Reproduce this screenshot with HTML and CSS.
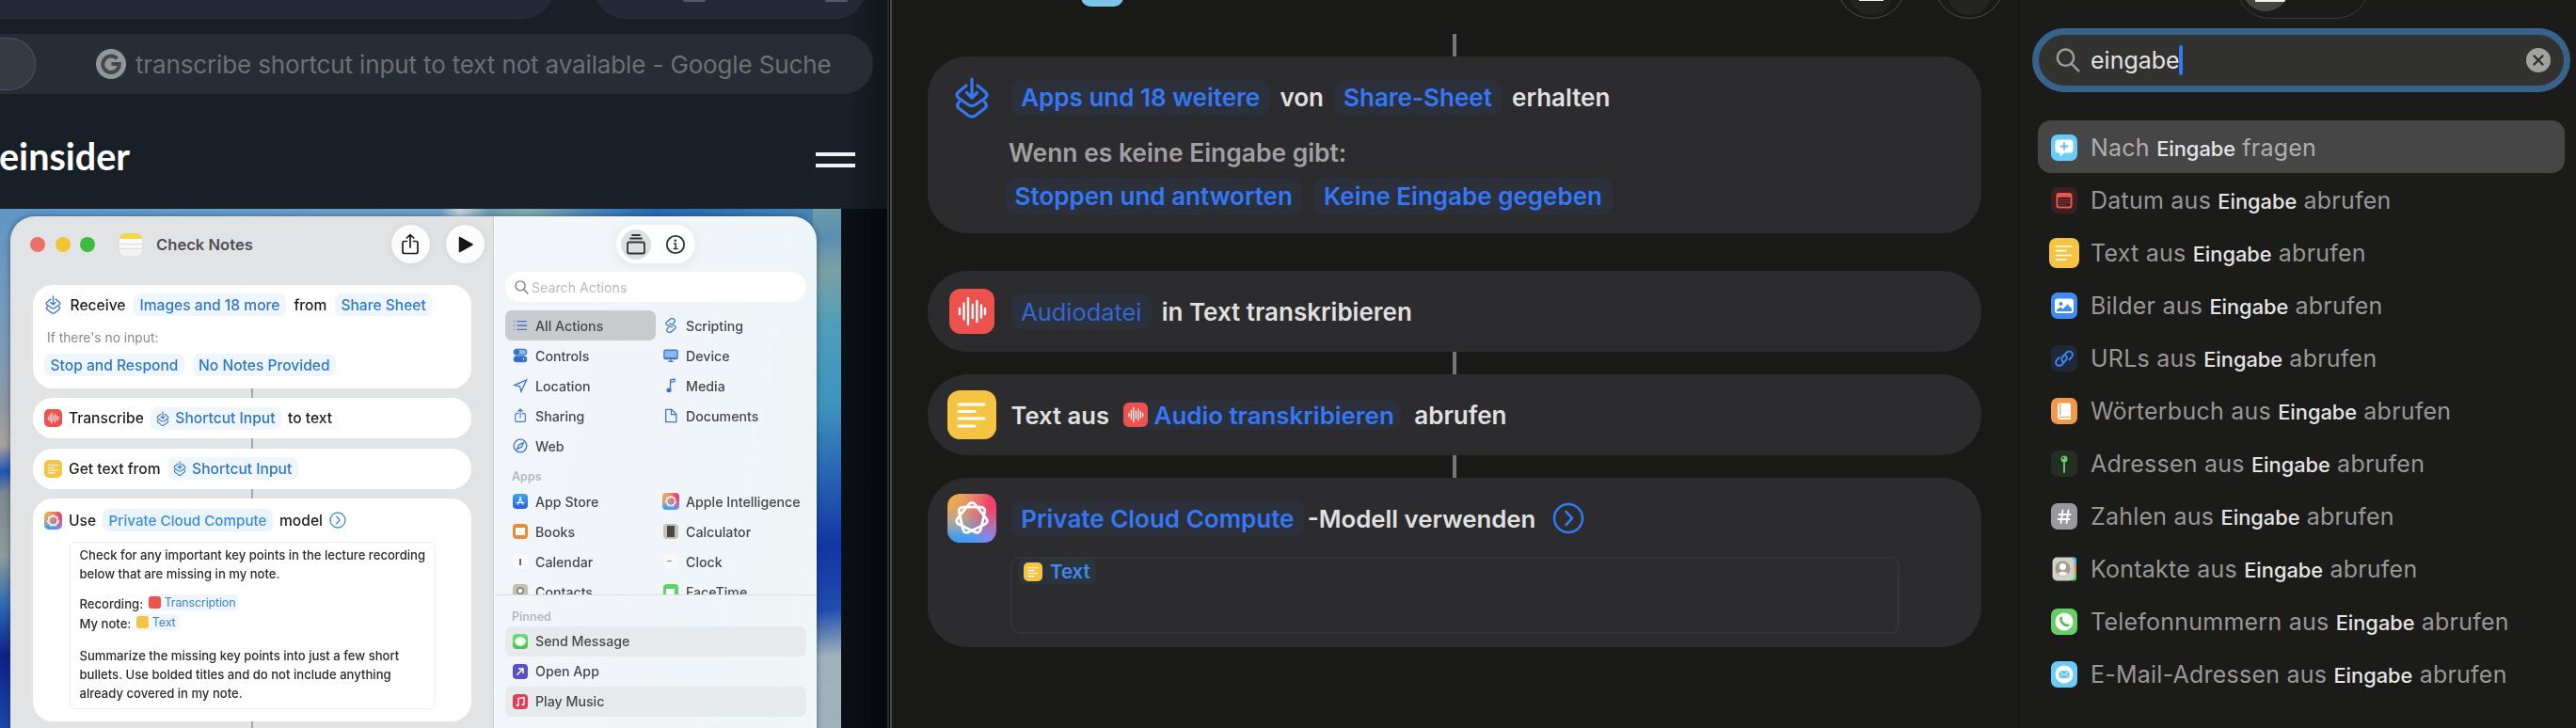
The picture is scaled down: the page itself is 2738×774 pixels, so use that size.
FILE: index.html
```html
<!DOCTYPE html>
<html lang="de">
<head>
    <meta charset="UTF-8"/>
    <meta name="viewport" content="width=device-width, initial-scale=1.0"/>
    <title>Kurzbefehle</title>
    <link rel="stylesheet" href="styles.css">
</head>
<body>
<!--shared icons-->
<svg class="defs" width="0" height="0">
    <symbol id="i-input" viewBox="0 0 36 44">
        <g fill="none" stroke="currentColor" stroke-width="3.2" stroke-linecap="round" stroke-linejoin="round">
            <path d="M12 9L3.6 16q-3 3 0 6L14.5 29.5q3.5 2.2 7 0L32.4 22q3-3 0-6L24 9"/>
            <path d="M4.5 26.5q-3.6 3.6-.5 6.5L14.5 41q3.5 2.2 7 0L32 33q3.1-2.9-.5-6.5"/>
            <path d="M18 2v19M12.5 16.5L18 22l5.5-5.5"/>
        </g>
    </symbol>
    <symbol id="i-wave" viewBox="0 0 48 48">
        <path d="M11 21v6M15.5 15.5v17M20 10v28M24.8 17v14M29.3 13v22M34 17.5v13M38 21v6" fill="none" stroke="#fff" stroke-width="2.4" stroke-linecap="round"/>
    </symbol>
    <symbol id="i-lines" viewBox="0 0 52 52">
        <path d="M12 15h27M12 22.5h17M12 30h27M12 38h17" fill="none" stroke="#fff" stroke-width="3" stroke-linecap="round"/>
    </symbol>
    <symbol id="i-flower" viewBox="0 0 52 52">
        <path d="M29.7 11.6L40.8 25.6Q44.5 30.2 39.2 32.8L23.1 40.5Q17.8 43.1 16.4 37.3L12.5 19.9Q11.2 14.2 17.1 14.2H34.9Q40.9 14.2 39.5 19.9L35.6 37.3Q34.2 43.1 28.9 40.5L12.8 32.8Q7.5 30.2 11.2 25.6L22.3 11.6Q26 7 29.7 11.6Z" fill="none" stroke="#fff" stroke-width="2.8" stroke-linejoin="round"/>
    </symbol>
    <symbol id="i-search" viewBox="0 0 26 26">
        <path d="M10.5 1.5a8.7 8.7 0 1 1 0 17.4a8.7 8.7 0 1 1 0-17.4zM17 17l7.3 7.3" fill="none" stroke="currentColor" stroke-width="2.4" stroke-linecap="round"/>
    </symbol>
    <symbol id="i-next" viewBox="0 0 34 34">
        <path d="M17 2a15 15 0 1 1 0 30a15 15 0 1 1 0-30zM14.5 10l6.5 7l-6.5 7" fill="none" stroke="currentColor" stroke-width="2.6" stroke-linecap="round" stroke-linejoin="round"/>
    </symbol>
    <symbol id="i-share" viewBox="0 0 20 24">
        <path d="M6.5 8.5H4q-2 0-2 2v9q0 2 2 2h12q2 0 2-2v-9q0-2-2-2h-2.5M10 15V1.5M6.3 5L10 1.5L13.7 5" fill="none" stroke="currentColor" stroke-width="1.7" stroke-linecap="round" stroke-linejoin="round"/>
    </symbol>
</svg>

<div class="desktop">
    <!--browser on the left-->
    <section class="browser">
        <div class="toolbar">
            <div class="pill address"></div>
            <div class="pill tools"><i></i><i></i></div>
        </div>
        <div class="tabs">
            <div class="tab current"></div>
            <div class="tab">
                <svg class="favicon" viewBox="0 0 32 32">
                    <circle cx="16" cy="16" r="16" fill="#94979a"/>
                    <path d="M22.5 10.5A8.7 8.7 0 1 0 24.7 16H16.5" fill="none" stroke="#43484d" stroke-width="4"/>
                </svg>
                <span>transcribe shortcut input to text not available - Google Suche</span>
            </div>
        </div>
        <header class="site">
            <span class="brand">einsider</span>
            <div class="burger"><i></i><i></i></div>
        </header>

        <div class="shot">
            <div class="win">
                <div class="flow">
                    <div class="bar">
                        <div class="lights"><i class="red"></i><i class="yellow"></i><i class="green"></i></div>
                        <div class="noteIcon"></div>
                        <b>Check Notes</b>
                        <div class="round"><svg width="20" height="24"><use href="#i-share"/></svg></div>
                        <div class="round"><svg width="16" height="18" viewBox="0 0 16 18"><path d="M1.5 1.5v15L15 9z" fill="#161616" stroke="#161616" stroke-width="1.5" stroke-linejoin="round"/></svg></div>
                    </div>

                    <div class="box first">
                        <div class="line">
                            <span class="slot"><svg class="in" width="17" height="20"><use href="#i-input"/></svg></span>
                            <span>Receive</span>
                            <span class="tag">Images and 18 more</span>
                            <span>from</span>
                            <span class="tag">Share Sheet</span>
                        </div>
                        <p class="cond">If there's no input:</p>
                        <div class="line second">
                            <span class="tag">Stop and Respond</span>
                            <span class="tag">No Notes Provided</span>
                        </div>
                    </div>
                    <div class="link"></div>
                    <div class="box">
                        <div class="line">
                            <span class="slot redIcon"><svg width="19" height="19"><use href="#i-wave"/></svg></span>
                            <span>Transcribe</span>
                            <span class="tag"><svg class="in" width="14" height="16"><use href="#i-input"/></svg>Shortcut Input</span>
                            <span>to text</span>
                        </div>
                    </div>
                    <div class="link"></div>
                    <div class="box">
                        <div class="line">
                            <span class="slot yellowIcon"><svg width="19" height="19"><use href="#i-lines"/></svg></span>
                            <span>Get text from</span>
                            <span class="tag"><svg class="in" width="14" height="16"><use href="#i-input"/></svg>Shortcut Input</span>
                        </div>
                    </div>
                    <div class="link"></div>
                    <div class="box last">
                        <div class="line">
                            <span class="slot aiIcon"><svg width="19" height="19"><use href="#i-flower"/></svg></span>
                            <span>Use</span>
                            <span class="tag sky">Private Cloud Compute</span>
                            <span>model</span>
                            <svg class="go" width="18" height="18"><use href="#i-next"/></svg>
                        </div>
                        <div class="prompt">
                            <p>Check for any important key points in the lecture recording<br>below that are missing in my note.</p>
                            <p class="vars">Recording: <span class="var"><i class="redIcon"></i>Transcription</span><br>My note: <span class="var"><i class="yellowIcon"></i>Text</span></p>
                            <p>Summarize the missing key points into just a few short<br>bullets. Use bolded titles and do not include anything<br>already covered in my note.</p>
                        </div>
                    </div>
                    <div class="link"></div>
                </div>

                <div class="library">
                    <div class="switch">
                        <span class="on"><svg width="22" height="24" viewBox="0 0 22 24"><path d="M7 2h8M5 5.5h12M4 9.5h14q2 0 2 2v8q0 2-2 2H4q-2 0-2-2v-8q0-2 2-2z" fill="none" stroke="#333" stroke-width="1.8" stroke-linecap="round"/></svg></span>
                        <span><svg width="22" height="22" viewBox="0 0 22 22"><circle cx="11" cy="11" r="9.2" fill="none" stroke="#333" stroke-width="1.8"/><circle cx="10.8" cy="6.7" r="1.3" fill="#333"/><path d="M9 10h2.2v5.5M8.6 15.5h5" fill="none" stroke="#333" stroke-width="1.5"/></svg></span>
                    </div>
                    <div class="find"><svg width="15" height="15"><use href="#i-search"/></svg>Search Actions</div>
                    <div class="scroll">
                        <ul class="grid">
                            <li class="cur"><svg viewBox="0 0 18 18"><path d="M5 4h12M5 9h12M5 14h12M1 4h1M1 9h1M1 14h1"/></svg>All Actions</li>
                            <li><svg viewBox="0 0 18 18"><path d="M9 1L4 5q-2 2.5 1 4l6 2M9 17l5-4q2-2.5-1-4L7 6.5M9 1q4-1 5 2q0 2-3 4M9 17q-4 1-5-2q0-2 3-4"/></svg>Scripting</li>
                            <li><svg viewBox="0 0 18 18"><rect x="1.5" y="1.5" width="15" height="6.5" rx="3.2" fill="#8fb4e6"/><circle cx="5" cy="4.8" r="2.3" fill="#2d69c9"/><rect x="1.5" y="10" width="15" height="6.5" rx="3.2" fill="#2d69c9"/><circle cx="13" cy="13.2" r="1.5" fill="#fff"/></svg>Controls</li>
                            <li><svg viewBox="0 0 18 18"><rect x="1" y="2.5" width="16" height="10.5" rx="1.5" fill="#8fb4f0"/><path d="M1 12h16M6 16h6M9 13v3"/></svg>Device</li>
                            <li><svg viewBox="0 0 18 18"><path d="M16.5 2L2 8.5l6.5 1.5L10 16z"/></svg>Location</li>
                            <li><svg viewBox="0 0 18 18"><path d="M8.5 14V2l5-.8v3l-5 .8"/><ellipse cx="6.8" cy="14.5" rx="2.2" ry="1.8" fill="#2d69c9"/></svg>Media</li>
                            <li><svg viewBox="0 0 20 24"><use href="#i-share"/></svg>Sharing</li>
                            <li><svg viewBox="0 0 18 18"><path d="M3 1.5h7L15.5 7v9.5H3zM9.5 1.5V7.5h6"/></svg>Documents</li>
                            <li><svg viewBox="0 0 18 18"><circle cx="9" cy="9" r="7.7"/><path d="M12.8 5.2L10.5 10.5L5.2 12.8L7.5 7.5z"/></svg>Web</li>
                        </ul>
                        <h4 class="label">Apps</h4>
                        <ul class="grid">
                            <li><i class="app store"><svg width="14" height="14" viewBox="0 0 14 14"><path d="M7.8 2.5L4 10.5M6.2 2.5L10 10.5M2.5 8.5h9" fill="none" stroke="#fff" stroke-width="1.2"/></svg></i>App Store</li>
                            <li><i class="app aiIcon big"><svg width="18" height="18"><use href="#i-flower"/></svg></i>Apple Intelligence</li>
                            <li><i class="app books"></i>Books</li>
                            <li><i class="app calc"></i>Calculator</li>
                            <li><i class="app cal"></i>Calendar</li>
                            <li><i class="app clock"></i>Clock</li>
                            <li><i class="app contacts"></i>Contacts</li>
                            <li><i class="app facetime"></i>FaceTime</li>
                        </ul>
                    </div>
                    <div class="pinned">
                        <h4 class="label">Pinned</h4>
                        <ul>
                            <li class="shade"><i class="app message"></i>Send Message</li>
                            <li><i class="app open"><svg width="14" height="14" viewBox="0 0 14 14"><path d="M3.5 10.5l6-6M5 4h5v5" fill="none" stroke="#fff" stroke-width="1.5"/></svg></i>Open App</li>
                            <li class="shade"><i class="app music"><svg width="14" height="14" viewBox="0 0 14 14"><path d="M5 11V3.5l6-1V10" fill="none" stroke="#fff" stroke-width="1.3"/><circle cx="4" cy="11" r="1.3" fill="#fff"/><circle cx="10" cy="10" r="1.3" fill="#fff"/></svg></i>Play Music</li>
                        </ul>
                    </div>
                </div>
            </div>
        </div>
    </section>

    <!--editor-->
    <main class="editor">
        <div class="head">
            <div class="appicon"></div>
            <div class="knob"><i></i></div>
            <div class="knob off"><i></i></div>
        </div>
        <div class="wire"></div>
        <div class="card">
            <div class="row">
                <span class="ico"><svg class="blue" width="36" height="44"><use href="#i-input"/></svg></span>
                <span class="chip">Apps und 18 weitere</span>
                <span>von</span>
                <span class="chip">Share-Sheet</span>
                <span>erhalten</span>
            </div>
            <p class="hint">Wenn es keine Eingabe gibt:</p>
            <div class="row sub">
                <span class="chip">Stoppen und antworten</span>
                <span class="chip">Keine Eingabe gegeben</span>
            </div>
        </div>
        <div class="wire none"></div>
        <div class="card single">
            <div class="row">
                <span class="ico"><i class="tile redIcon"><svg width="48" height="48"><use href="#i-wave"/></svg></i></span>
                <span class="chip empty">Audiodatei</span>
                <span>in Text transkribieren</span>
            </div>
        </div>
        <div class="wire"></div>
        <div class="card single">
            <div class="row">
                <span class="ico"><i class="tile large yellowIcon"><svg width="52" height="52"><use href="#i-lines"/></svg></i></span>
                <span class="lead">Text aus</span>
                <span class="chip slim"><i class="mini redIcon"><svg width="26" height="26"><use href="#i-wave"/></svg></i>Audio transkribieren</span>
                <span class="tail">abrufen</span>
            </div>
        </div>
        <div class="wire"></div>
        <div class="card model">
            <div class="row">
                <span class="ico"><i class="tile large aiIcon"><svg width="52" height="52"><use href="#i-flower"/></svg></i></span>
                <span class="chip">Private Cloud Compute</span>
                <span class="glue">-Modell verwenden</span>
                <svg class="blue more" width="34" height="34"><use href="#i-next"/></svg>
            </div>
            <div class="field">
                <span class="token"><i class="yellowIcon"><svg width="20" height="20"><use href="#i-lines"/></svg></i>Text</span>
            </div>
        </div>
    </main>

    <!--action search-->
    <aside class="sidebar">
        <div class="head">
            <div class="modes"><i class="on"></i><i></i></div>
        </div>
        <div class="search">
            <svg class="glass" width="26" height="26"><use href="#i-search"/></svg>
            <span>eingabe</span><i class="caret"></i>
            <svg class="clear" width="26" height="26" viewBox="0 0 26 26"><circle cx="13" cy="13" r="13" fill="#a2a2a1"/><path d="M8.5 8.5l9 9M17.5 8.5l-9 9" stroke="#30302f" stroke-width="2.4" stroke-linecap="round"/></svg>
        </div>
        <ul class="results">
            <li class="cur">
                <svg viewBox="0 0 28 28"><rect width="28" height="28" rx="7" fill="#68cdf8"/><path d="M8 5.5h12q3.5 0 3.5 3v7.5q0 3.5-3.5 3.5h-6l-4.5 4v-4H8q-3.5 0-3.5-3.5V8.5q0-3 3.5-3z" fill="#fff"/><path d="M14 8.5v8M10 12.5h8" stroke="#54c4f5" stroke-width="1.8"/></svg>
                <span>Nach <b>Eingabe</b> fragen</span>
            </li>
            <li>
                <svg viewBox="0 0 28 28"><rect width="28" height="28" rx="7" fill="#382120"/><rect x="6.5" y="7" width="15" height="14.5" rx="2" fill="none" stroke="#f0544f" stroke-width="2"/><path d="M6 9h16" stroke="#f0544f" stroke-width="3.5"/><path d="M9.5 13.5h9.5M9.5 16h9.5M9.5 18.5h6" stroke="#d84b47" stroke-width="1.2" stroke-dasharray="1.3 1.3"/></svg>
                <span>Datum aus <b>Eingabe</b> abrufen</span>
            </li>
            <li>
                <svg class="wide" viewBox="0 0 32 32"><rect width="32" height="32" rx="8" fill="#f5c443"/><path d="M7.5 9h16M7.5 13.7h10.5M7.5 18.5h16M7.5 23.2h10.5" stroke="#fff" stroke-width="1.7" stroke-linecap="round"/></svg>
                <span>Text aus <b>Eingabe</b> abrufen</span>
            </li>
            <li>
                <svg viewBox="0 0 28 28"><rect width="28" height="28" rx="7" fill="#3d8bf7"/><rect x="4" y="6.5" width="20" height="15.5" rx="3" fill="#fff"/><circle cx="10.5" cy="12" r="2" fill="#3d8bf7"/><path d="M6 20v-1.5l4-3l2.5 2l5-5l4.5 4.5V20z" fill="#3d8bf7"/></svg>
                <span>Bilder aus <b>Eingabe</b> abrufen</span>
            </li>
            <li>
                <svg viewBox="0 0 28 28"><rect width="28" height="28" rx="7" fill="#1f2836"/><g fill="none" stroke="#3d8bf7" stroke-width="1.9" stroke-linecap="round"><path d="M13 18a3.6 3.6 0 0 1-.8-5.5l4.5-4.8a3.6 3.6 0 0 1 5.2 5l-2.5 2.8"/><path d="M15 10.5a3.6 3.6 0 0 1 .8 5.5l-4.5 4.8a3.6 3.6 0 0 1-5.2-5l2.5-2.8"/></g></svg>
                <span>URLs aus <b>Eingabe</b> abrufen</span>
            </li>
            <li>
                <svg viewBox="0 0 28 28"><rect width="28" height="28" rx="7" fill="#f2984a"/><path d="M9.5 5.5h9.5q2 0 2 2V23H9.5q-2.5 0-2.5-2.5V8q0-2.5 2.5-2.5z" fill="#fff"/><path d="M9.8 6v12.5M8.5 20.5h12" stroke="#f2984a" stroke-width="1.2"/></svg>
                <span>Wörterbuch aus <b>Eingabe</b> abrufen</span>
            </li>
            <li>
                <svg viewBox="0 0 28 28"><rect width="28" height="28" rx="7" fill="#232e24"/><circle cx="14" cy="9" r="3.5" fill="#66cf66"/><path d="M14 11v12" stroke="#66cf66" stroke-width="1.9" stroke-linecap="round"/><circle cx="13" cy="8" r="1" fill="#232e24"/></svg>
                <span>Adressen aus <b>Eingabe</b> abrufen</span>
            </li>
            <li>
                <svg viewBox="0 0 28 28"><rect width="28" height="28" rx="7" fill="#98989e"/><path d="M12.5 7.5L10.5 21M18.5 7.5L16.5 21M8.5 12h12M7.5 17h12" stroke="#fff" stroke-width="1.9" stroke-linecap="round"/></svg>
                <span>Zahlen aus <b>Eingabe</b> abrufen</span>
            </li>
            <li>
                <svg viewBox="0 0 28 28"><rect x="20" y="1.5" width="7" height="25" rx="3" fill="#63cf6f"/><path d="M20 1.5h3q4 0 4 4V10h-7z" fill="#55b8f3"/><path d="M22 10h5v8h-5z" fill="#f2903c"/><rect x="1.5" y="1.5" width="23" height="25" rx="5" fill="#d0d2c3"/><circle cx="12.5" cy="13.5" r="8" fill="#a29c8f"/><circle cx="12.5" cy="11.5" r="3.5" fill="#fff"/><path d="M7 19q5.5-5 11 0q-5.5 4.5-11 0z" fill="#f2f2ee"/></svg>
                <span>Kontakte aus <b>Eingabe</b> abrufen</span>
            </li>
            <li>
                <svg viewBox="0 0 28 28"><rect width="28" height="28" rx="7" fill="#67cf67"/><circle cx="14" cy="14" r="9.5" fill="#fff"/><path d="M10.8 9.8q-1.3 3 2 6.2q3 2.8 5.4 1.6" fill="none" stroke="#4dbb50" stroke-width="2.6" stroke-linecap="round"/></svg>
                <span>Telefonnummern aus <b>Eingabe</b> abrufen</span>
            </li>
            <li>
                <svg viewBox="0 0 28 28"><rect width="28" height="28" rx="7" fill="#6acdf8"/><circle cx="14" cy="14" r="9.5" fill="#fff"/><rect x="8.5" y="10.3" width="11" height="7.6" rx="1.5" fill="#5cc5f4"/><path d="M9 10.8l5 4l5-4M9 17.5l3.5-3.5M19 17.5L15.5 14" fill="none" stroke="#fff" stroke-width=".9"/></svg>
                <span>E-Mail-Adressen aus <b>Eingabe</b> abrufen</span>
            </li>
        </ul>
    </aside>
</div>
</body>
</html>
```
FILE: styles.css
```css
* {
    margin: 0;
    padding: 0;
    box-sizing: border-box;
}

body {
    background: #191917;
    font-family: Inter, "Liberation Sans", sans-serif;
    overflow: hidden;
}

ul {
    list-style: none;
}

svg {
    display: block;
    flex: none;
}

.defs {
    position: absolute;
}

.desktop {
    display: grid;
    grid-template-columns: 948px 1198px 592px;
    height: 774px;
    overflow: hidden;
}

/* icon tiles */
.redIcon {
    background: #ec524e;
}

.yellowIcon {
    background: #f5c443;
}

.aiIcon {
    background: radial-gradient(circle at 8% 8%, #f2ac48 0, rgba(242, 172, 72, 0) 60%),
        radial-gradient(circle at 92% 18%, #f0436c 10%, rgba(240, 67, 108, 0) 62%),
        radial-gradient(circle at 100% 88%, #8d86f2 0, rgba(141, 134, 242, 0) 45%),
        linear-gradient(#c98f94, #8aa5c4 55%, #3d9bf3 95%);
}

/* browser */
.browser {
    background: linear-gradient(90deg, #181f26 0, #181f26 900px, #12161d 943px);
    border-right: 2px solid #4b4b48;
    box-shadow: inset -1px 0 #050607, inset -3px 0 #2a2e32;
    overflow: hidden;
}

.toolbar {
    display: flex;
    gap: 44px;
    height: 36px;
}

.pill {
    height: 66px;
    margin-top: -46px;
    background: #232935;
    border-bottom: 1px solid #2d2f31;
}

.address {
    width: 588px;
    border-radius: 0 32px 32px 0;
}

.tools {
    display: flex;
    justify-content: space-between;
    width: 288px;
    padding: 44px 19px 0 94px;
    border-radius: 32px;
}

.tools i {
    width: 24px;
    height: 4px;
    border-radius: 2px;
    background: #565b63;
}

.tabs {
    display: flex;
    width: 928px;
    height: 64px;
    padding: 4px 0;
    background: #272d34;
    border-radius: 0 32px 32px 0;
}

.tab {
    display: flex;
    align-items: center;
    gap: 10px;
    padding-left: 64px;
    color: #6c7176;
    font-size: 26px;
    letter-spacing: -.14px;
    white-space: nowrap;
}

.tab.current {
    width: 38px;
    background: #343b43;
    border: 1px solid #43566c;
    border-left: 0;
    border-radius: 0 28px 28px 0;
    padding: 0;
}

.favicon {
    width: 32px;
    height: 32px;
}

.site {
    display: flex;
    align-items: center;
    justify-content: space-between;
    height: 122px;
    padding: 0 37px 18px 0;
}

.brand {
    margin-left: -1px;
    color: #fff;
    font: 700 39.5px/50px Lato, sans-serif;
    padding-top: 27px;
}

.burger {
    display: grid;
    gap: 8px;
    padding-top: 36px;
}

.burger i {
    width: 42px;
    height: 4px;
    background: #f0f1f2;
}

/* article image with the light window */
.shot {
    width: 943px;
    height: 552px;
    padding: 8px 75px 0 11px;
    background: linear-gradient(90deg, #0b1018, #06090e) 894px 0 / 49px 552px no-repeat,
        linear-gradient(172deg, #6f9da9 0, #5a8fb0 6%, #7ba0a4 12%, #4c9dbb 24%, #3f93bd 38%, #2a69b5 50%, #1335a5 65%, #1f4dad 77%, #9fb2bb 86%, #a0b1b8 100%) 864px 0 / 30px 552px no-repeat,
        linear-gradient(168deg, #6097c6 0, #7f9ab5 28%, #9298a3 38%, #a9a29e 45%, #1d55b8 50%, #7a8a90 54%, #8e9c9a 66%, #2a66b0 76%, #0d2088 85%, #1c4cac 100%) 0 0 / 40px 552px no-repeat,
        linear-gradient(100deg, #5c99cd 0, #6fa2c9 45%, #c3d3df 47%, #6ba0b5 50%, #86aeb3 54%, #4f87b7 60%, #256ab7 67%, #3f80b4 80%, #7aa0a7 100%);
}

.win {
    display: grid;
    grid-template-columns: 514px 343px;
    height: 600px;
    border-radius: 26px;
    overflow: hidden;
    filter: blur(.4px);
    box-shadow: 0 0 6px rgba(20, 30, 50, .5);
}

.flow {
    padding: 0 23px 0 23.5px;
    background: #e1e3e5;
    border-right: 1px solid #c9ccd0;
    font-size: 15.6px;
    font-weight: 500;
    color: #1d1d1f;
}

.bar {
    display: flex;
    align-items: center;
    height: 59px;
    margin: 0 -14px 13.7px -2.5px;
}

.bar b {
    margin-left: 15px;
    margin-right: auto;
    font-size: 16.6px;
    font-weight: 600;
    color: #4e5053;
}

.lights {
    display: flex;
    gap: 10.5px;
}

.lights i {
    width: 16px;
    height: 16px;
    border-radius: 50%;
}

.lights .red {
    background: #ed6f69;
}

.lights .yellow {
    background: #f3c536;
}

.lights .green {
    background: #3dbb3e;
}

.noteIcon {
    width: 24px;
    height: 24px;
    margin-left: 26px;
    border-radius: 6px;
    background: linear-gradient(#f2d54f 6px, #fafafa 6px, #fafafa 11px, #d8d8d8 11px, #d8d8d8 12px, #f7f7f7 12px, #f7f7f7 16px, #dcdcdc 16px, #dcdcdc 17px, #f3f3f3 17px);
}

.round {
    display: flex;
    align-items: center;
    justify-content: center;
    width: 41px;
    height: 41px;
    margin-left: 17.5px;
    border-radius: 50%;
    background: #fcfcfd;
    box-shadow: 0 0 8px rgba(0, 0, 0, .08);
}

.box {
    height: 43.3px;
    padding: 9.7px 12.5px;
    border-radius: 21px;
    background: #fff;
}

.box.first {
    height: 110px;
}

.box.last {
    height: 236.5px;
    padding-top: 11px;
}

.link {
    width: 2px;
    height: 10.3px;
    margin: 0 auto;
    background: #a4a6a9;
}

.line {
    display: flex;
    align-items: center;
    gap: 7px;
    height: 24px;
    white-space: nowrap;
}

.first .line {
    gap: 8.5px;
}

.slot {
    display: flex;
    justify-content: center;
    align-items: center;
    width: 19px;
    height: 19px;
    border-radius: 5px;
}

.in {
    color: #3f7fcb;
}

.tag {
    display: flex;
    align-items: center;
    gap: 6px;
    height: 24px;
    padding: 0 6.5px;
    border-radius: 7px;
    background: #eff6fd;
    color: #2f77cf;
}

.tag.sky {
    color: #3d8bdc;
    background: #eaf4fd;
    font-size: 15.2px;
}

.cond {
    padding: 13px 0 7px 3px;
    font-size: 13.8px;
    font-weight: 400;
    line-height: 20px;
    color: #88898b;
}

.go {
    color: #3d8bdc;
}

.prompt {
    width: 389px;
    height: 178px;
    margin: 11px 0 0 26.5px;
    padding: 4px 10px;
    border: 1px solid #efefef;
    border-radius: 6px;
    font-size: 13.1px;
    line-height: 19.7px;
    color: #2b2b2c;
    white-space: nowrap;
}

.prompt .vars {
    margin: 11px 0 13.5px;
    line-height: 21.7px;
}

.var {
    display: inline-flex;
    align-items: center;
    gap: 4px;
    height: 17px;
    margin-left: 2px;
    padding-right: 3px;
    border-radius: 4px;
    background: #eff6fd;
    color: #3d83cf;
    font-weight: 400;
    font-size: 12.6px;
    letter-spacing: -.2px;
    line-height: 17px;
}

.var i {
    width: 13px;
    height: 13px;
    border-radius: 3px;
}

.library {
    padding: 9px 11px 0;
    background: linear-gradient(100deg, #f2f5f9 0, #f1f5f9 50%, #edf5f7 85%, #f3f8f9 100%);
    border-left: 1px solid #fff;
    font-size: 14.2px;
    font-weight: 500;
    color: #46484b;
}

.switch {
    display: flex;
    align-items: center;
    justify-content: space-between;
    width: 84px;
    height: 41px;
    margin: 0 auto;
    padding: 0 10px 0 5px;
    border-radius: 21px;
    background: #fdfefe;
    box-shadow: 0 2px 14px rgba(0, 0, 0, .07);
}

.switch span {
    display: flex;
    align-items: center;
    justify-content: center;
}

.switch .on {
    width: 32px;
    height: 32px;
    border-radius: 50%;
    background: #dcdfe1;
}

.find {
    display: flex;
    align-items: center;
    gap: 3px;
    height: 32px;
    margin: 9px 0;
    padding-left: 10px;
    border-radius: 16px;
    background: #fff;
    color: #b9babc;
    font-weight: 400;
}

.find svg {
    color: #7c7e80;
}

.scroll {
    height: 302px;
    overflow: hidden;
}

.grid {
    display: grid;
    grid-template-columns: 160px 160px;
}

.library li {
    display: grid;
    grid-template-columns: 31px 1fr;
    gap: 1px;
    align-items: center;
    height: 32px;
    border-radius: 7px;
    white-space: nowrap;
}

.library li > svg,
.app {
    justify-self: center;
    width: 16px;
    height: 16px;
}

.library li > svg {
    fill: none;
    stroke: #3d78d0;
    stroke-width: 1.5;
    color: #3d78d0;
}

.library li.cur {
    background: #c8cacd;
}

.app {
    display: flex;
    align-items: center;
    justify-content: center;
    border-radius: 4px;
}

.app.big {
    width: 18px;
    height: 18px;
}

.store {
    background: linear-gradient(#3fa4f5, #2464dc);
}

.books {
    background: linear-gradient(#fff, #fff) 3px 4px / 10px 8px no-repeat, #ea8c34;
}

.calc {
    background: linear-gradient(#4a4640, #4a4640) 4px 2px / 8px 12px no-repeat, #c4c1ba;
}

.cal {
    background: linear-gradient(#6d6665, #6d6665) 7px 5px / 2px 7px no-repeat, #fbfafa;
}

.clock {
    background: linear-gradient(#888, #888) 4px 7px / 5px 1px no-repeat, #f8f8f8;
}

.contacts {
    background: radial-gradient(circle at 50% 45%, #fff 2px, #8e8a80 2.5px, #8e8a80 4px, transparent 4.5px), #c5bfae;
}

.facetime {
    background: linear-gradient(#fff, #fff) 3px 5px / 9px 6px no-repeat, #5fd36a;
}

.message {
    background: radial-gradient(ellipse 6px 5px at center, #f2fff2 90%, transparent), linear-gradient(#6fe077, #45c350);
}

.open {
    background: #5a50c8;
}

.music {
    background: #e23d5c;
}

.label {
    height: 27.4px;
    padding: 5px 0 0 7px;
    font-size: 12.5px;
    line-height: 24px;
    font-weight: 600;
    color: #b3b6b9;
}

.pinned {
    margin: 0 -11px;
    padding: 0 11px;
    border-top: 1px solid #dadde0;
}

.pinned .label {
    height: 32.5px;
    padding-top: 11px;
}

.shade {
    background: #e7eaec;
}

/* editor */
.editor {
    padding: 0 40px 0 38px;
    background: #191917;
    color: #e0e0e0;
    font-size: 26px;
    font-weight: 600;
}

.head {
    display: flex;
    height: 36px;
}

.appicon {
    width: 45px;
    height: 45px;
    margin: -38px auto 0 163px;
    border-radius: 10px;
    background: #7cc3ea;
}

.knob {
    width: 74px;
    height: 74px;
    margin: -54px 0 0 30px;
    padding: 6px 13px;
    border: 1px solid #4a4a49;
    border-radius: 50%;
}

.knob:last-child {
    margin-right: -24px;
}

.knob i {
    display: block;
    width: 46px;
    height: 63px;
    border-radius: 23px;
    background: linear-gradient(#f2f2f2, #f2f2f2) 10px 38px / 26px 10px no-repeat, #222221;
}

.knob.off i {
    background: #242423;
}

.wire {
    width: 4px;
    height: 24px;
    margin: 0 auto;
    background: #77777b;
}

.wire.none {
    height: 40px;
    background: none;
}

.card {
    width: 1120px;
    height: 188px;
    padding: 24.5px 21px 0;
    border-radius: 42px;
    background: #2c2c2e;
}

.card.single {
    height: 86px;
    padding-top: 24px;
}

.card.model {
    height: 180px;
    padding-top: 24px;
}

.row {
    display: flex;
    align-items: center;
    gap: 10.6px;
    height: 38px;
    white-space: nowrap;
}

.ico {
    display: flex;
    justify-content: center;
    width: 52px;
    margin-right: 5px;
}

.blue {
    color: #3478f6;
}

.tile {
    width: 48px;
    height: 48px;
    border-radius: 12px;
}

.tile.large {
    width: 52px;
    height: 52px;
    border-radius: 13px;
}

.chip {
    display: flex;
    align-items: center;
    height: 38px;
    padding: 0 10.6px;
    border-radius: 10px;
    background: #2c303b;
    color: #3478f6;
}

.chip.empty {
    color: #3269d0;
    font-size: 25.4px;
    font-weight: 400;
}

.chip.slim {
    gap: 7px;
    height: 32px;
    margin-left: 2px;
    padding: 0 7px 0 2px;
    font-size: 25.9px;
}

.mini {
    width: 26px;
    height: 26px;
    border-radius: 6px;
}

.lead {
    font-size: 25.6px;
}

.tail {
    margin-left: 4px;
}

.glue {
    margin-left: -7px;
    font-size: 25.8px;
}

.more {
    margin-left: 7px;
}

.hint {
    padding: 20px 0 9px 65px;
    font-size: 26.4px;
    line-height: 38px;
    color: #a0a0a0;
}

.sub {
    gap: 12px;
    padding-left: 61px;
}

.field {
    width: 945px;
    height: 82px;
    margin: 22px 0 0 67px;
    border: 2px solid #353538;
    border-radius: 10px;
}

.token {
    display: flex;
    align-items: center;
    gap: 8px;
    width: 82px;
    height: 27px;
    margin-left: 7px;
    padding-left: 5px;
    border-radius: 6px;
    background: #2b333d;
    color: #3f8cf0;
    font-size: 20.5px;
}

.token i {
    width: 20px;
    height: 20px;
    border-radius: 5px;
}

/* sidebar */
.sidebar {
    padding: 0 6px 0 13px;
    background: #1b1b1a;
    border-left: 1px solid #131312;
    overflow: hidden;
}

.sidebar .head {
    height: 30px;
    padding-left: 216px;
}

.modes {
    display: flex;
    gap: 30px;
    width: 143px;
    height: 74px;
    margin-top: -54px;
    padding: 6px;
    border: 1px solid #3a3a39;
    border-radius: 37px;
}

.modes i {
    width: 60px;
    height: 59px;
    border-radius: 29px;
    background: linear-gradient(#eee, #eee) 8px 38px / 13px 9px no-repeat;
}

.modes .on {
    background: linear-gradient(#f4f4f4, #f4f4f4) 14px 40px / 33px 9px no-repeat, #444443;
}

.search {
    display: flex;
    align-items: center;
    height: 68px;
    padding: 0 14px 0 18px;
    border: 7px solid #36628c;
    border-radius: 34px;
    background: #323231;
    color: #e2e2e2;
    font-size: 25px;
}

.glass {
    margin-right: 11px;
    color: #a0a09f;
}

.caret {
    width: 4px;
    height: 32px;
    margin-left: -1px;
    border-radius: 2px;
    background: #3478f6;
}

.clear {
    margin-left: auto;
}

.results {
    padding: 30px 6px 0;
}

.results li {
    display: flex;
    align-items: center;
    height: 56px;
    padding: 1px 0 0 14px;
    border-radius: 14px;
    color: #989897;
    font-size: 25px;
    letter-spacing: .23px;
    white-space: nowrap;
}

.results li.cur {
    background: #464646;
    color: #aeaeae;
}

.results li > svg {
    width: 28px;
    height: 28px;
    margin-right: 14px;
}

.results li > svg.wide {
    width: 32px;
    height: 32px;
    margin: 0 12px 0 -2px;
}

.results b {
    color: #e4e4e4;
    font-size: 21.8px;
    font-weight: 500;
    letter-spacing: 0;
}
```
